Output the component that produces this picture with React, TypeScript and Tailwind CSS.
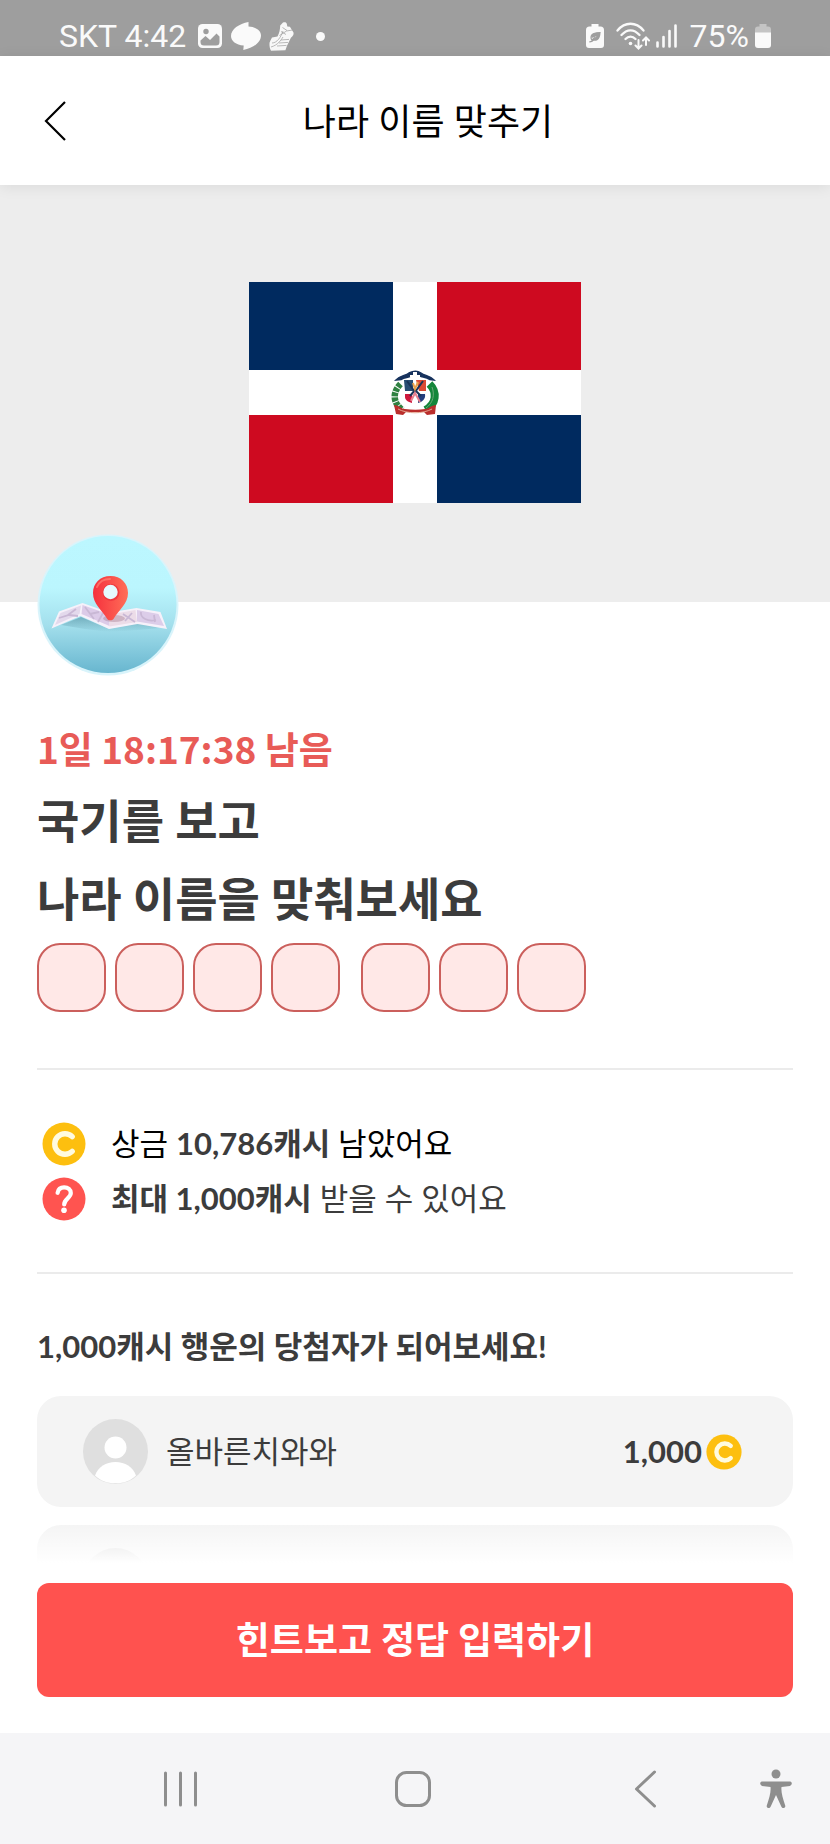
import React from "react";

const sans = "font-[Lato,'Noto_Sans_CJK_KR',sans-serif]";

function Coin({ className }: { className: string }) {
  return (
    <svg viewBox="0 0 44 44" className={className} aria-hidden="true">
      <circle cx="22" cy="22" r="21.5" fill="#fdbf0f" />
      <path d="M30.2 14.6a10.3 10.3 0 1 0 0 14.8" fill="none" stroke="#fffbe0" strokeWidth="5.4" strokeLinecap="round" />
    </svg>
  );
}

function QuestionBadge() {
  return (
    <svg viewBox="0 0 44 44" className="size-11 shrink-0" aria-hidden="true">
      <circle cx="22" cy="22" r="21.5" fill="#ff5450" />
      <path d="M15.6 15.8c.6-3.6 3.2-5.4 6.5-5.4 3.9 0 6.7 2.3 6.7 5.7 0 5-6.6 5.6-6.6 11.4" fill="none" stroke="#fff" strokeWidth="4.2" strokeLinecap="round" />
      <circle cx="22" cy="33.2" r="2.8" fill="#fff" />
    </svg>
  );
}

function StatusBar() {
  return (
    <div className="flex h-14 shrink-0 items-end justify-between bg-[#9e9e9e] pr-[59px] pb-[2px] pl-[59px] font-[Roboto,sans-serif] text-[32px] leading-9 text-[#fafafa]">
      <div className="flex items-center">
        <span>SKT 4:42</span>
        <svg viewBox="0 0 24 24" className="ml-3 size-6" aria-hidden="true">
          <rect width="24" height="24" rx="4.5" fill="#fafafa" />
          <circle cx="8" cy="7.5" r="2.7" fill="#9e9e9e" />
          <path d="M2.5 16.5 7.5 12l4.5 4 6.5-6.5 3 3V18a3.5 3.5 0 0 1-3.500 3.500H6A3.500 3.500 0 0 1 2.500 18z" fill="#9e9e9e" />
        </svg>
        <svg viewBox="0 0 30 28" className="ml-[9px] h-7 w-[30px]" aria-hidden="true">
          <path d="M17.500 0C8 1.800 0 7.200 0 14c0 5 5 9 12.700 9.500L12.300 28C22 26.300 30 20.500 30 13.500c0-4.700-5-8.700-12.500-9z" fill="#fafafa" />
        </svg>
        <svg viewBox="0 0 25 30" className="ml-2 h-[30px] w-[25px]" aria-hidden="true">
          <path d="M14 1.500c2-.8 3.500-.2 3.800 1.300l.5 2.600 2.600.3 3.600 5.800c.5 2-.6 3.600-2.600 5.200l-4 8.300-1.500 4.200-14.400.6c-1.200-2-1.700-5-1.500-8 .5-1.600 1.500-3.300 2.500-5.200l5.500-1.100c2-3.500 2.500-7 2.700-11z" fill="#f8f8f8" />
          <path d="M13.500 6.500 18 9.500M12 10.500l5 3M10.500 14.500l7-4.500 6-1M3 22c5 0 9-6 11-12M2 26c7-2 10-7 12-10M12 19l8-.6M10 22l9-.6M8 25l9.500-.6" fill="none" stroke="#9e9e9e" strokeWidth=".7" />
        </svg>
        <span className="ml-[22px] size-[9px] rounded-full bg-[#fafafa]" />
      </div>
      <div className="flex items-center">
        <svg viewBox="0 0 18 24" className="h-6 w-[18px]" aria-hidden="true">
          <path d="M5.500 0h7v2.500h2A3.500 3.500 0 0 1 18 6v15a3 3 0 0 1-3 3H3a3 3 0 0 1-3-3V6a3.500 3.500 0 0 1 3.500-3.500h2z" fill="#fafafa" />
          <path d="M14.500 8.500c-5 0-9.500 1-9.500 5 0 1 .3 1.800.8 2.400L9.500 13l-3 4c-1 .6-2 .9-3.200.9" fill="none" stroke="#9e9e9e" strokeWidth="1.2" />
          <path d="M14.500 8.500c-5 0-9.500 1-9 5.500 2.500-.5 4-1.500 5-2-1 1.500-2.500 3.300-4 4.500 5.500 1.500 8-2.500 8-8z" fill="#9e9e9e" />
        </svg>
        <svg viewBox="0 0 34 28" className="ml-3 h-7 w-[34px]" aria-hidden="true">
          <g fill="none" stroke="#fafafa" strokeWidth="2.3" strokeLinecap="round">
            <path d="M1.500 8.500C9-.5 20-.5 27.500 8.500M5.500 13c5.500-6.300 12.500-6.300 18 0M9.500 17c3-3.300 7-3.300 10 0" />
            <path d="M22.500 18v8M19.500 23.500l3 3 3-3M30 23v-7.500M27 18.500l3-3 3 3" strokeWidth="2" />
          </g>
          <circle cx="14.5" cy="21.5" r="1.8" fill="#fafafa" />
        </svg>
        <svg viewBox="0 0 22 24" className="ml-[6px] h-6 w-[22px]" aria-hidden="true">
          <path d="M1.500 18.500v4M7.500 13v9.500M13.500 7v15.500M19.500 1.500v21" stroke="#fafafa" strokeWidth="2.6" strokeLinecap="round" />
        </svg>
        <span className="ml-3">75%</span>
        <svg viewBox="0 0 16 24" className="ml-[6px] h-6 w-4" aria-hidden="true">
          <path d="M4.500 0h7v2.500h1.500A3 3 0 0 1 16 5.500V9H0V5.500a3 3 0 0 1 3-3h1.500z" fill="#c4c4c4" />
          <path d="M0 8.500h16V21a3 3 0 0 1-3 3H3a3 3 0 0 1-3-3z" fill="#fafafa" />
        </svg>
      </div>
    </div>
  );
}

function Flag() {
  return (
    <svg viewBox="0 0 332 221" className="w-2/5" role="img" aria-label="국기">
      <rect width="332" height="221" fill="#fff" />
      <path d="M0 0h144v88H0zM188 133h144v88H188z" fill="#002a5f" />
      <path d="M188 0h144v88H188zM0 133h144v88H0z" fill="#ce0a20" />
      <path d="M147 98c5-5 9-4 13-7 4-2 9-2 12 0 4 3 8 2 13 7l-4-.5c-5-3-8-2-10-3.500h-9c-3 2-6 1-10 3.500z" fill="#17325d" stroke="#17325d" strokeWidth="1.5" />
      <path d="M164 90h4v10h-4zM161 93h10v2h-10z" fill="#fff" />
      <path d="M151.500 102c-8 8-8 19 2 26" fill="none" stroke="#2f8141" strokeWidth="6.5" strokeDasharray="4 1" />
      <path d="M180.500 102c8 8 7 20-4 26" fill="none" stroke="#14863a" strokeWidth="8" />
      <path d="M183 105c3 8 1 16-6 21" fill="none" stroke="#6ca978" strokeWidth="1" />
      <path d="M155 98h22v16c0 5-6 6-11 8-5-2-11-3-11-8z" fill="#fff" />
      <path d="M155 98h9v11h-8z" fill="#294d73" />
      <path d="M167 98h10v11h-7z" fill="#db4b34" />
      <path d="M156 112h7v9c-4-1-7-3-7-6z" fill="#cf183c" />
      <path d="M169 112h7c1 5-3 8-7 9z" fill="#243e7d" />
      <path d="m158 99 8 11 8-11M161 114l5-6 6 6" fill="none" stroke="#1b3558" strokeWidth="2" />
      <path d="m164 101 2 6 3-7" fill="none" stroke="#e9a24b" strokeWidth="2" />
      <path d="m162 119 4-8 5 9" fill="none" stroke="#e8808f" strokeWidth="2" />
      <path d="M145 123c5 0 7 4 11 4 7 1 14 1 20 0 4 0 6-4 11-4l-1 9-8 1-3-3h-18l-3 3-7-1z" fill="#ba2e2c" />
      <path d="M149 127c9 5 25 5 34 0" fill="none" stroke="#e3a58f" strokeWidth="1" />
    </svg>
  );
}

function MapBadge() {
  return (
    <svg viewBox="0 0 142 142" className="size-[142px]" aria-hidden="true">
      <defs>
        <linearGradient id="sky" x1="0" y1="0" x2="0" y2="1">
          <stop offset="0" stopColor="#bcf7ff" />
          <stop offset=".38" stopColor="#bbf6fe" />
          <stop offset=".65" stopColor="#a3dfec" />
          <stop offset="1" stopColor="#68b6cf" />
        </linearGradient>
        <linearGradient id="pin" x1="0" y1="0" x2="1" y2="0">
          <stop offset="0" stopColor="#f5313d" />
          <stop offset="1" stopColor="#ff6e58" />
        </linearGradient>
        <linearGradient id="shade" x1="0" y1="0" x2="0" y2="1">
          <stop offset="0" stopColor="#4f8b9c" stopOpacity=".6" />
          <stop offset="1" stopColor="#4f8b9c" stopOpacity="0" />
        </linearGradient>
      </defs>
      <circle cx="71" cy="71" r="70.5" fill="#d9f4fb" />
      <circle cx="71" cy="70.5" r="68.5" fill="url(#sky)" />
      <path d="m24 91 20-8 28 12 29-6 22 5-22 2-29 2-24-3z" fill="url(#shade)" />
      <path d="m14.500 94.500 7.500-17L45.500 69l27 9.500 27-4.500 24 4 6.500 17-29.500-5-28.500 5L43.500 82z" fill="#f6f1fa" />
      <path d="m18 91 5.500-12L44 71.500 42.500 80z" fill="#e3d9ec" />
      <path d="m45.500 71 27 9.500V92L44.500 80z" fill="#dccbe8" />
      <path d="m72.500 80.500 26-4.500 1.500 12-27.500 4.500z" fill="#ecdce8" />
      <path d="m100 76 21.500 4 5.500 12-27-4.500z" fill="#dccde9" />
      <path d="m22 84 10-3 9 1M31 81l8-6M48 73l9 12M53 80l9-2M61 88l5-9M86 80l12 8M88 87l7-8M104 78c-1 6 7 10 15 8M117 81l1 7" fill="none" stroke="#c9b8d5" strokeWidth="1.8" />
      <ellipse cx="77" cy="84.5" rx="11" ry="3.5" fill="#a2788b" opacity=".4" />
      <path d="M73.500 42C63 42 56 49.500 56 59c0 11 9 17 14.300 26 .8 1.700 5.200 1.700 6.200 0C81.500 76 91 70 91 59c0-9.500-7-17-17.500-17z" fill="url(#pin)" />
      <path d="M60 53c2-5 7-8 13-8" fill="none" stroke="#ff8d7d" strokeWidth="2" strokeLinecap="round" opacity=".6" />
      <circle cx="74" cy="58.5" r="8.4" fill="#e92f39" opacity=".7" />
      <circle cx="73.5" cy="58" r="7.2" fill="#e5fbff" />
    </svg>
  );
}

function Avatar() {
  return (
    <svg viewBox="0 0 65 65" className="size-[65px] shrink-0" aria-hidden="true">
      <circle cx="32.5" cy="32.5" r="32.5" fill="#dfdfdf" />
      <circle cx="32.5" cy="28.5" r="11" fill="#fff" />
      <path d="M12 56.500c3-8.500 11-13.500 20.500-13.500S50 48 53 56.500c-5 5-12 7.800-20.500 7.800S17 61.500 12 56.500z" fill="#fff" />
    </svg>
  );
}

function Winner({ name, cash }: { name: string; cash: string }) {
  return (
    <li className="flex h-[111px] items-center rounded-3xl bg-[#f4f4f4] pr-[51px] pl-[46px]">
      <Avatar />
      <span className="ml-[18px] flex-1 text-[31px]">{name}</span>
      <span className="text-[31px] font-bold">{cash}</span>
      <Coin className="ml-1 size-9" />
    </li>
  );
}

function AnswerGroup({ count }: { count: number }) {
  return (
    <div className="flex gap-[9px]">
      {Array.from({ length: count }, (_, i) => (
        <span key={i} className="size-[69px] rounded-[23px] border-2 border-[#cb5f5c] bg-[#ffe8e7]" />
      ))}
    </div>
  );
}

export default function App() {
  return (
    <div className={`flex h-screen flex-col bg-white text-[#3c3c3c] ${sans}`}>
      <StatusBar />
      <header className="relative z-10 flex h-[129px] shrink-0 items-center justify-center bg-white pl-[26px] shadow-[0_2px_14px_rgba(0,0,0,0.08)]">
        <button type="button" aria-label="뒤로" className="absolute left-11">
          <svg viewBox="0 0 24 40" className="h-10 w-6" aria-hidden="true">
            <path d="M21 1 2 20l19 19" fill="none" stroke="#000" strokeWidth="2.2" />
          </svg>
        </button>
        <h1 className="text-4xl text-black">나라 이름 맞추기</h1>
      </header>

      <div className="relative min-h-0 flex-1">
        <main className="h-full overflow-y-auto [scrollbar-width:none]">
          <div className="relative flex h-[417px] items-center justify-center bg-[#ededed] pb-[2px]">
            <Flag />
            <div className="absolute -bottom-[74px] left-[37px]">
              <MapBadge />
            </div>
          </div>

          <div className="px-[37px] pt-[119px]">
            <p className="font-['Noto_Sans_CJK_KR',sans-serif] text-[37px] leading-[54px] font-bold text-[#e85b57]">
              1일 18:17:38 남음
            </p>
            <h2 className="mt-[7px] text-[46px] leading-[78px] font-bold">
              국기를 보고
              <br />
              나라 이름을 맞춰보세요
            </h2>
            <div className="mt-[5px] flex gap-[21px]">
              <AnswerGroup count={4} />
              <AnswerGroup count={3} />
            </div>

            <div className="mt-14 border-y-2 border-[#ebebeb] py-[46px] text-[31px] leading-[55px]">
              <p className="flex items-center gap-[25px] pl-[5px]">
                <Coin className="size-11 shrink-0" />
                <span className="text-black">
                  상금 <b className="text-[#3c3c3c]">10,786캐시</b> 남았어요
                </span>
              </p>
              <p className="flex items-center gap-[25px] pl-[5px]">
                <QuestionBadge />
                <span>
                  <b>최대 1,000캐시</b> 받을 수 있어요
                </span>
              </p>
            </div>

            <h3 className="mt-12 text-[31px] leading-[48px] font-bold">1,000캐시 행운의 당첨자가 되어보세요!</h3>
            <ul className="mt-[26px] flex flex-col gap-[18px]">
              <Winner name="올바른치와와" cash="1,000" />
              <li className="h-[111px] rounded-3xl bg-[#f4f4f4] pt-[23px] pl-[46px]">
                <Avatar />
              </li>
            </ul>
          </div>
        </main>
        <div className="pointer-events-none absolute inset-x-0 bottom-0 h-10 bg-linear-to-b from-white/0 to-white" />
      </div>

      <div className="shrink-0 px-[37px] pt-5 pb-9">
        <button type="button" className="h-[114px] w-full rounded-xl bg-[#ff524f] text-[37px] font-bold text-white">
          힌트보고 정답 입력하기
        </button>
      </div>

      <nav className="relative flex h-[111px] shrink-0 items-center bg-[#f5f5f7] pr-[68px] pl-16">
        <button type="button" aria-label="최근 앱" className="flex flex-1 justify-center">
          <svg viewBox="0 0 37 38" className="h-[38px] w-[37px]" aria-hidden="true">
            <path d="M3.500 3v32M18.500 3v32M33.500 3v32" stroke="#8e8e8e" strokeWidth="3" strokeLinecap="round" />
          </svg>
        </button>
        <button type="button" aria-label="홈" className="flex flex-1 justify-center">
          <svg viewBox="0 0 38 38" className="size-[38px]" aria-hidden="true">
            <rect x="2.5" y="2.5" width="33" height="33" rx="10" fill="none" stroke="#8e8e8e" strokeWidth="3" />
          </svg>
        </button>
        <button type="button" aria-label="이전" className="flex flex-1 justify-center">
          <svg viewBox="0 0 24 38" className="h-[38px] w-6" aria-hidden="true">
            <path d="M20.500 2 2.500 19l18 17" fill="none" stroke="#8e8e8e" strokeWidth="3" strokeLinecap="round" strokeLinejoin="round" />
          </svg>
        </button>
        <button type="button" aria-label="접근성" className="absolute right-[38px]">
          <svg viewBox="0 0 32 40" className="h-10 w-8" aria-hidden="true">
            <circle cx="16" cy="5" r="4.5" fill="#8e8e8e" />
            <path d="M2 12.500h28a2 2 0 0 1 1.500 3L30 17l-8.500 1c-.6 5 1.200 11 3.700 18.500.8 2.600-2.800 3.600-3.800 1.300L16 26l-5.400 11.800c-1 2.300-4.600 1.300-3.800-1.300C9.300 29 11.100 23 10.500 18L2 17 .5 15.500a2 2 0 0 1 1.500-3z" fill="#8e8e8e" />
          </svg>
        </button>
      </nav>
    </div>
  );
}
